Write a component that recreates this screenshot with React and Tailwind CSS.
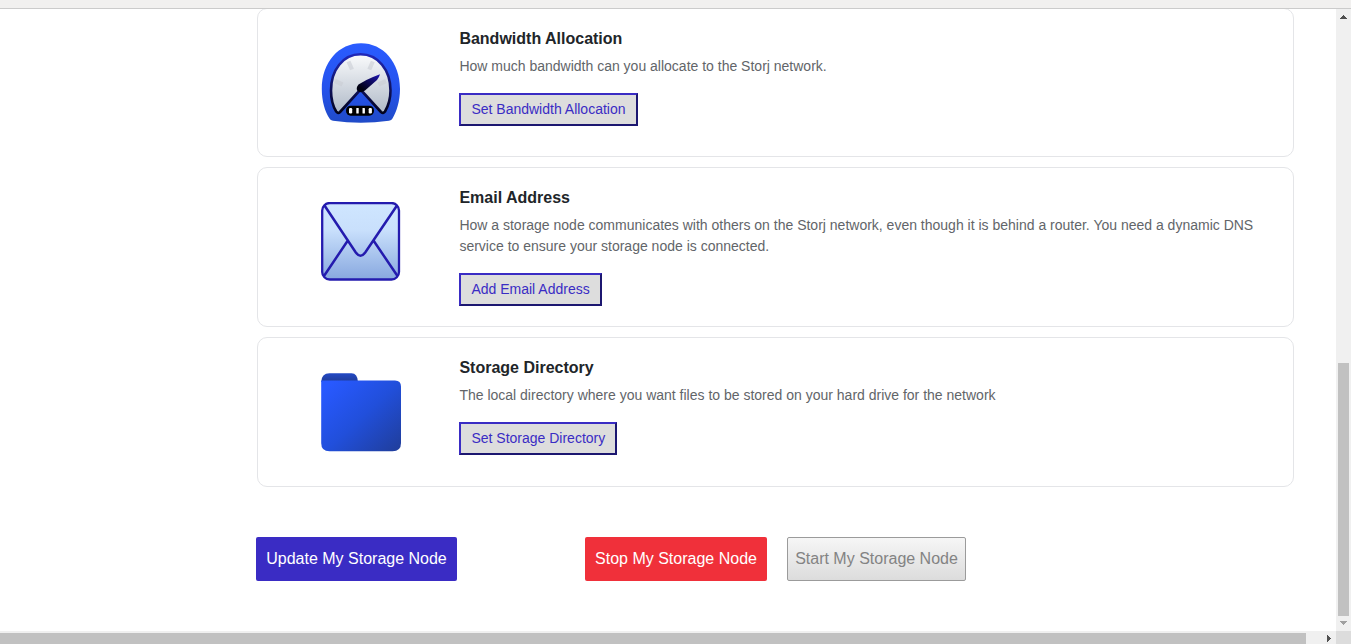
import React from 'react';

function GaugeIcon() {
  return (
    <svg viewBox="0 0 80 80" className="h-[80px] w-[80px]">
      <defs>
        <linearGradient id="body" x1="0" y1="0" x2="0" y2="1">
          <stop offset="0" stopColor="#2a5cff" />
          <stop offset="0.55" stopColor="#2553ed" />
          <stop offset="1" stopColor="#204bc8" />
        </linearGradient>
        <linearGradient id="dial" x1="0" y1="0" x2="0" y2="1">
          <stop offset="0" stopColor="#fafbfc" />
          <stop offset="1" stopColor="#b0bac8" />
        </linearGradient>
        <linearGradient id="rim" x1="0" y1="0" x2="0" y2="1">
          <stop offset="0" stopColor="#2027b8" />
          <stop offset="1" stopColor="#03031c" />
        </linearGradient>
        <linearGradient id="needle" x1="0" y1="1" x2="1" y2="0">
          <stop offset="0.2" stopColor="#000010" />
          <stop offset="1" stopColor="#1d14b4" />
        </linearGradient>
      </defs>
      <path d="M40 0.3C62 0.3 79 19 79 46C79 58 75.500 69 71.500 75.500Q70.500 77.300 68 77.800Q39.500 81.500 12 77.800Q9.500 77.300 8.500 75.500C4 69 0.800 58 0.800 46C0.800 19 18 0.300 40 0.300Z" fill="url(#body)" />
      <path d="M39.500 46.500L19 69Q17 71 15.200 68.500C11.500 62.500 10 55 10 47.500C10 27 22 11.300 39.500 11.300C57 11.300 69.500 27 69.500 47.500C69.500 55 67.500 62.500 64 68.500Q62.300 71 60 69Z" fill="url(#dial)" stroke="url(#rim)" strokeWidth="2.600" strokeLinejoin="round" />
      <g stroke="#c9cdd3" strokeOpacity="0.6" strokeWidth="4.200">
        <path d="M27.500 18.500L31 26.500M51.800 18.500L48.300 26.500M14 38L21.500 41.500M65 38L57.500 41.500" />
      </g>
      <path d="M59 31.300Q58.300 34 56 37L44 47.500Q39.500 50.500 36.500 48Q34.500 45 37.500 41.500Q44 37.200 52 34Z" fill="url(#needle)" />
      <rect x="25" y="62.700" width="28" height="10" rx="4.700" fill="#000" />
      <g fill="#fff">
        <rect x="28" y="65" width="3.200" height="5.500" rx="1.200" />
        <rect x="35.300" y="65" width="2.400" height="5.500" rx="0.600" />
        <rect x="41.500" y="65" width="2.400" height="5.500" rx="0.600" />
        <rect x="47.700" y="65" width="3.200" height="5.500" rx="1.200" />
      </g>
    </svg>
  );
}

function MailIcon() {
  return (
    <svg viewBox="0 0 80 80" className="h-[80px] w-[80px]">
      <defs>
        <linearGradient id="paper" x1="0" y1="0" x2="0" y2="1">
          <stop offset="0" stopColor="#cfe6ff" />
          <stop offset="0.35" stopColor="#c9e0fc" />
          <stop offset="1" stopColor="#88a8df" />
        </linearGradient>
      </defs>
      <rect x="1.200" y="1" width="76.800" height="76.500" rx="7.500" fill="url(#paper)" stroke="#241bae" strokeWidth="2.300" />
      <path d="M3.500 3.500L34.800 50.500Q39.500 57 44.200 50.500L76 3.500M26.500 39L3 74M52.800 39L76.500 74" fill="none" stroke="#241bae" strokeWidth="2.500" />
    </svg>
  );
}

function FolderIcon() {
  return (
    <svg viewBox="0 0 80 80" className="mt-px h-[80px] w-[80px]">
      <defs>
        <linearGradient id="folder" x1="0.050" y1="0.100" x2="0.950" y2="0.950">
          <stop offset="0" stopColor="#2859ff" />
          <stop offset="0.500" stopColor="#214fdb" />
          <stop offset="1" stopColor="#203fa0" />
        </linearGradient>
        <linearGradient id="tab" x1="0" y1="0" x2="0" y2="1">
          <stop offset="0" stopColor="#2349c5" />
          <stop offset="1" stopColor="#1f3c98" />
        </linearGradient>
      </defs>
      <path d="M0.200 9Q0.500 0.200 8.500 0.200H30.500Q36.500 0.200 37 9Z" fill="url(#tab)" />
      <path d="M0.200 7.500H74Q80 7.500 80 13.500V70Q80 78.300 71.500 78.300H8.500Q0.200 78.300 0.200 70Z" fill="url(#folder)" />
    </svg>
  );
}

function SettingCard({ icon, title, text, action, size }) {
  return (
    <section className={`flex shrink-0 rounded-[10px] border border-[#e4e5e8] bg-white pl-[63px] pt-5 ${size}`}>
      <div className="w-[138.4px] shrink-0 pt-[14px]">{icon}</div>
      <div className="w-[810px]">
        <h2 className="text-base leading-5 font-bold text-[#212529]">{title}</h2>
        <p className="mt-[7px] text-sm leading-[21px] text-[#626569]">{text}</p>
        <button className="mt-4 block h-[33px] border-2 border-t-[#3a2cc4] border-r-[#1c1770] border-b-[#1c1770] border-l-[#3a2cc4] bg-[#dddddd] px-[10px] text-sm leading-[29px] text-[#3a2cc4]">
          {action}
        </button>
      </div>
    </section>
  );
}

export default function App() {
  return (
    <div className="flex h-[644px] w-[1351px] flex-col overflow-hidden bg-white font-['Liberation_Sans',Arial,sans-serif]">
      <div className="h-[9px] shrink-0 border-b border-[#cbcbcb] bg-[#f1f0ef]" />
      <div className="flex h-[622px] shrink-0">
        <main className="flex h-full w-[1336px] flex-col overflow-hidden">
          <div className="-mt-[1px] ml-[257px] flex w-[1037px] shrink-0 flex-col gap-[10px]">
            <SettingCard
              size="h-[149px]"
              icon={<GaugeIcon />}
              title="Bandwidth Allocation"
              text="How much bandwidth can you allocate to the Storj network."
              action="Set Bandwidth Allocation"
            />
            <SettingCard
              size="h-[160px]"
              icon={<MailIcon />}
              title="Email Address"
              text="How a storage node communicates with others on the Storj network, even though it is behind a router. You need a dynamic DNS service to ensure your storage node is connected."
              action="Add Email Address"
            />
            <SettingCard
              size="h-[150px]"
              icon={<FolderIcon />}
              title="Storage Directory"
              text="The local directory where you want files to be stored on your hard drive for the network"
              action="Set Storage Directory"
            />
          </div>
          <div className="mt-[50px] ml-[256px] flex h-11 shrink-0 text-base">
            <button className="w-[201px] rounded-[2px] bg-[#3a2cc4] text-white">Update My Storage Node</button>
            <button className="ml-32 w-[182px] rounded-[2px] bg-[#f0303a] text-white">Stop My Storage Node</button>
            <button disabled className="ml-5 w-[179px] rounded-[2px] border border-[#9b9b9b] bg-linear-to-b from-[#f6f6f6] to-[#dcdcdc] text-[#838383]">
              Start My Storage Node
            </button>
          </div>
        </main>
        <div className="flex w-[15px] flex-col items-center bg-[#f0f0f0]">
          <svg className="mt-[6px] h-1 w-[7px] shrink-0" viewBox="0 0 7 4" shapeRendering="crispEdges">
            <path d="M3 0h1v1h1v1h1v1h1v1H0V3h1V2h1V1h1z" fill="#505050" />
          </svg>
          <div className="mt-[344px] h-[253px] w-[11px] shrink-0 bg-[#c1c1c1]" />
          <svg className="mt-[5px] h-1 w-[7px] shrink-0" viewBox="0 0 7 4" shapeRendering="crispEdges">
            <path d="M0 0h7v1H6v1H5v1H4v1H3V3H2V2H1V1H0z" fill="#a0a0a0" />
          </svg>
        </div>
      </div>
      <div className="flex h-[13px] shrink-0 bg-[#f0f0f0]">
        <div className="mt-[2px] h-[11px] w-[1306px] bg-[#c1c1c1]" />
        <div className="flex w-[30px] items-start pt-1 pl-[21px]">
          <svg className="h-[7px] w-1" viewBox="0 0 4 7" shapeRendering="crispEdges">
            <path d="M0 0h1v1h1v1h1v1h1v1H3v1H2v1H1v1H0z" fill="#505050" />
          </svg>
        </div>
        <div className="w-[15px] bg-[#dcdcdc]" />
      </div>
    </div>
  );
}
